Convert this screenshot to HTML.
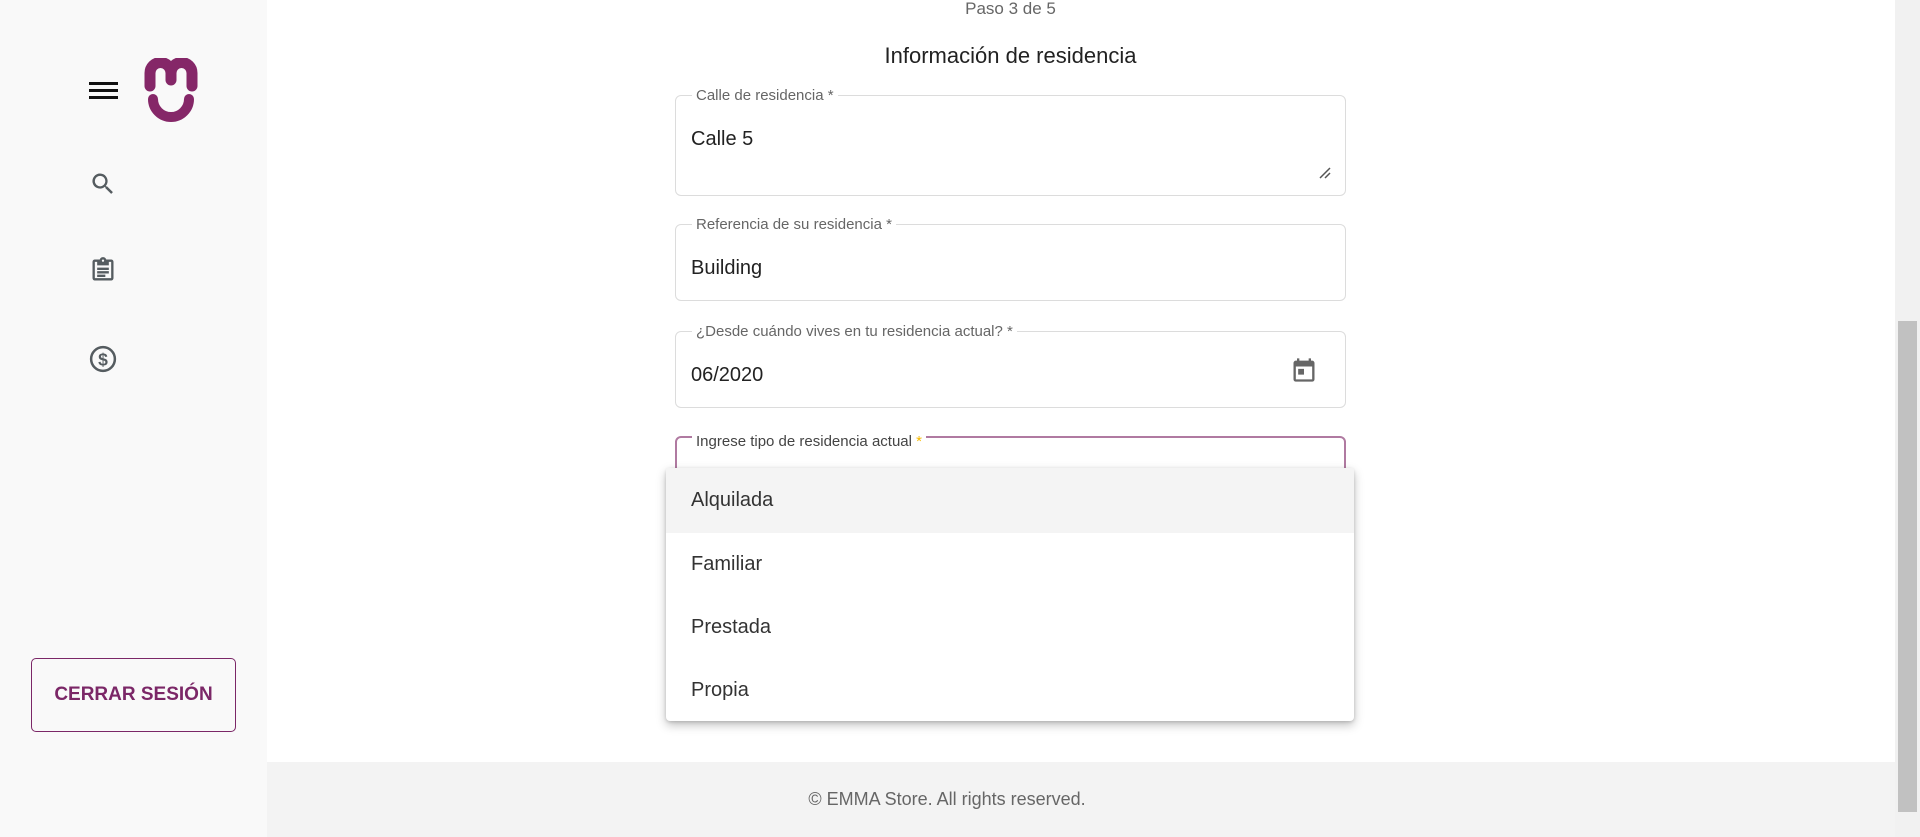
<!DOCTYPE html>
<html><head><meta charset="utf-8"><style>
*{box-sizing:border-box;margin:0;padding:0}
body{width:1920px;height:837px;overflow:hidden;font-family:"Liberation Sans",sans-serif;background:#fff;position:relative;color:#222}
.side{position:absolute;left:0;top:0;width:267px;height:837px;background:#f9f9f9}
.main{position:absolute;left:267px;top:0;width:1628px;height:762px;background:#fff}
.footer{position:absolute;left:267px;top:762px;width:1628px;height:75px;background:#f3f3f3}
.ft{position:absolute;left:267px;top:762px;width:1360px;text-align:center;line-height:75px;font-size:18px;color:#666}
.sb{position:absolute;left:1895px;top:0;width:25px;height:837px;background:#f1f1f1}
.thumb{position:absolute;left:1898px;top:321px;width:19px;height:491px;background:#c1c1c1}
.field{position:absolute;left:675px;width:671px;border:1px solid #dcdcdc;border-radius:6px;background:#fff}
.lbl{position:absolute;left:16px;top:-8px;background:#fff;padding:0 4px;font-size:15px;color:#666;line-height:16px}
.val{position:absolute;left:15px;font-size:20px;color:#222}
.dd{position:absolute;left:666px;top:468px;width:688px;height:253px;background:#fff;box-shadow:0 4px 10px rgba(0,0,0,.25),0 1px 3px rgba(0,0,0,.15);border-radius:4px}
.it{height:63px;line-height:63px;padding-left:25px;font-size:20px;color:#333}
.btn{position:absolute;left:31px;top:658px;width:205px;height:74px;border:1px solid #7b2767;border-radius:5px;color:#7b2767;font-size:19px;font-weight:bold;text-align:center;line-height:72px}
</style></head><body>
<div class="side">
 <div style="position:absolute;left:89px;top:82px;width:29px;height:3px;background:#111"></div>
 <div style="position:absolute;left:89px;top:89px;width:29px;height:3px;background:#111"></div>
 <div style="position:absolute;left:89px;top:96px;width:29px;height:3px;background:#111"></div>
 <svg style="position:absolute;left:143px;top:58px" width="56" height="64" viewBox="0 0 56 64">
  <path d="M7 28V15a10.5 10.5 0 0 1 21 0V22M28 15a10.5 10.5 0 0 1 21 0V28" fill="none" stroke="#852768" stroke-width="11" stroke-linecap="round"/>
  <path d="M10 41a18 18 0 0 0 36 0" fill="none" stroke="#852768" stroke-width="10" stroke-linecap="round"/>
 </svg>
 <svg style="position:absolute;left:89px;top:170px" width="28" height="28" viewBox="0 0 24 24"><path d="M15.5 14h-.8l-.3-.3A6.5 6.5 0 1 0 9.5 16a6.5 6.5 0 0 0 4.2-1.6l.3.3v.8l5 5 1.5-1.5zm-6 0A4.5 4.5 0 1 1 14 9.5 4.5 4.5 0 0 1 9.5 14z" fill="#555c60"/></svg>
 <svg style="position:absolute;left:89px;top:256px" width="28" height="28" viewBox="0 0 24 24"><path d="M19 3h-4.2A3 3 0 0 0 12 1a3 3 0 0 0-2.8 2H5a2 2 0 0 0-2 2v14a2 2 0 0 0 2 2h14a2 2 0 0 0 2-2V5a2 2 0 0 0-2-2zm-7 0a1 1 0 1 1 0 2 1 1 0 0 1 0-2zm7 16H5V5h2v3h10V5h2zM7 10h10v2H7zm0 3h10v2H7zm0 3h7v2H7z" fill="#555c60"/></svg>
 <svg style="position:absolute;left:88px;top:344px" width="30" height="30" viewBox="0 0 24 24"><circle cx="12" cy="12" r="9.5" fill="none" stroke="#555c60" stroke-width="2"/><text x="12" y="17" text-anchor="middle" font-size="14" font-family="Liberation Sans" fill="#555c60" font-weight="bold">$</text></svg>
 <div class="btn">CERRAR SESIÓN</div>
</div>
<div class="main"></div>
<div style="position:absolute;left:675px;width:671px;top:0;text-align:center;font-size:17px;color:#666;line-height:18px">Paso 3 de 5</div>
<div style="position:absolute;left:675px;width:671px;top:43px;text-align:center;font-size:22px;color:#222">Información de residencia</div>
<div class="field" style="top:95px;height:101px"><div class="lbl">Calle de residencia *</div><div class="val" style="top:32px">Calle 5</div>
 <svg style="position:absolute;right:14px;bottom:16px" width="12" height="12" viewBox="0 0 12 12"><path d="M1 11L11 1M6 11L11 6" stroke="#555" stroke-width="1.5"/></svg></div>
<div class="field" style="top:224px;height:77px"><div class="lbl">Referencia de su residencia *</div><div class="val" style="top:32px">Building</div></div>
<div class="field" style="top:331px;height:77px"><div class="lbl">¿Desde cuándo vives en tu residencia actual? *</div><div class="val" style="top:32px">06/2020</div>
 <svg style="position:absolute;left:614px;top:24px" width="28" height="28" viewBox="0 0 24 24"><path d="M19 4h-1V2h-2v2H8V2H6v2H5a2 2 0 0 0-2 2v14a2 2 0 0 0 2 2h14a2 2 0 0 0 2-2V6a2 2 0 0 0-2-2zm0 16H5V9h14zM7 11h5v5H7z" fill="#666"/></svg></div>
<div class="field" style="top:436px;height:77px;border:2px solid #b07aa1"><div class="lbl" style="left:15px;top:-4px;color:#444">Ingrese tipo de residencia actual <span style="color:#f5b800">*</span></div></div>
<div class="dd">
 <div class="it" style="background:#f4f4f4;height:65px;line-height:65px">Alquilada</div>
 <div class="it">Familiar</div>
 <div class="it">Prestada</div>
 <div class="it">Propia</div>
</div>
<div class="footer"></div>
<div class="ft">© EMMA Store. All rights reserved.</div>
<div class="sb"></div><div class="thumb"></div>
</body></html>
